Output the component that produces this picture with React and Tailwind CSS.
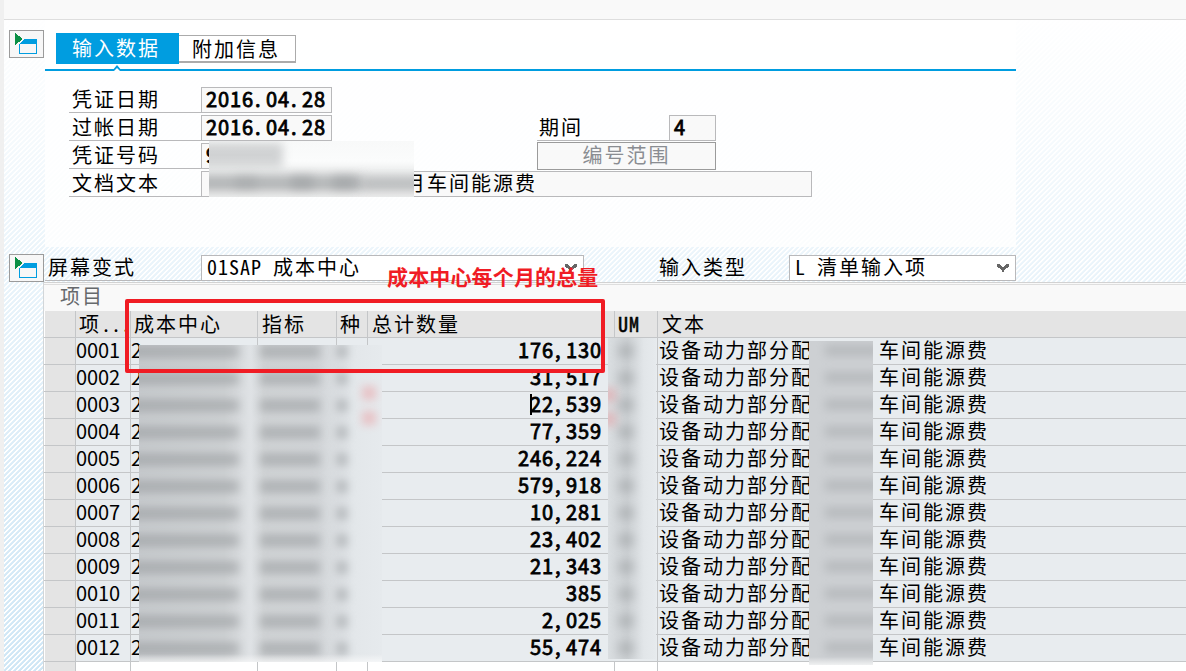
const font = "font-['Noto_Sans_CJK_SC',sans-serif]";
const half = "[font-feature-settings:'hwid'] tracking-[1px]";

const rows = [
  ["0001", "176,130"],
  ["0002", "31,517"],
  ["0003", "22,539"],
  ["0004", "77,359"],
  ["0005", "246,224"],
  ["0006", "579,918"],
  ["0007", "10,281"],
  ["0008", "23,402"],
  ["0009", "21,343"],
  ["0010", "385"],
  ["0011", "2,025"],
  ["0012", "55,474"],
];

const columns = "grid grid-cols-[32px_55px_127px_79px_31px_247px_43px_1fr]";

// Emphasised figures: every character, punctuation included, takes a 12px cell.
function Figures({ value }) {
  return (
    <span className="tracking-[0.9px] [-webkit-text-stroke:0.8px_#000]">
      {value.split(/([.,])/).map((part, i) =>
        part === "." || part === "," ? (
          <span key={i} className="inline-block w-3 pl-px text-left">
            {part}
          </span>
        ) : (
          part
        ),
      )}
    </span>
  );
}

function Stripes({ className }) {
  return (
    <div
      className={
        "absolute bg-[repeating-linear-gradient(135deg,#cce5f5_0px,#cce5f5_1.6px,#ffffff_2px,#ffffff_3.1px,#cce5f5_3.536px)] " +
        className
      }
    />
  );
}

function PanelButton() {
  return (
    <div className="h-7 w-[35px] shrink-0 border border-[#9b9b9b] bg-[#f7f7f7]">
      <svg width="33" height="26" viewBox="0 0 33 26" shapeRendering="crispEdges">
        <path d="M9 8h18v15H9z" fill="#009de0" />
        <path d="M10 13h16v9H10z" fill="#f7f7f7" />
        <path d="M4 1h3l8 7-8 7H4z" fill="#f7f7f7" />
        <path d="M5 2l8 6-8 6z" fill="#0a8f45" />
      </svg>
    </div>
  );
}

function Label({ children, className = "" }) {
  return (
    <div className={"h-[26px] border-b border-[#b9b9bb] leading-[24px] whitespace-pre tracking-[2px] " + className}>
      {children}
    </div>
  );
}

function Chevron() {
  return (
    <svg width="12" height="8" viewBox="0 0 12 8" shapeRendering="crispEdges" className="mt-[8px] mr-[6px] shrink-0">
      <path d="M0 0h3v1h1v1h1v1h2v-1h1v-1h1v-1h3v3h-1v1h-2v1h-1v1h-1v2h-2v-2h-1v-1h-1v-1h-2v-1h-1z" fill="#666666" />
    </svg>
  );
}

function Field({ children, className = "" }) {
  return (
    <div className={"h-[26px] border border-[#b9b9bb] bg-[#f9f9f9] leading-[22px] whitespace-pre " + className}>
      {children}
    </div>
  );
}

function Smudge({ className }) {
  return <div className={"absolute bg-[#85898c] blur-[5px] " + className} />;
}

export default function App() {
  return (
    <div className={"relative flex h-[671px] w-[1186px] overflow-hidden bg-white text-[20px] text-black " + font}>
      <div className="w-1 shrink-0 bg-[#f0f0f0]" />
      <Stripes className="top-5 bottom-0 left-1 right-0" />
      <div className="absolute top-5 bottom-0 left-1 right-0 bg-[linear-gradient(to_bottom,#fffffffa_0%,#ffffffd8_15%,#ffffff98_38%,#ffffff40_75%,#ffffff10_100%)]" />
      <div className="absolute top-5 left-[45px] h-[227px] w-[971px] bg-white/80" />

      <div className="relative flex min-w-0 flex-1 flex-col">
        <div className="h-5 shrink-0 border-b border-[#dedede] bg-[#f9f9f9]" />
        <div className="flex h-[235px] shrink-0 pt-[10px] pl-[5px]">
          <PanelButton />
          <div className="ml-px w-[971px]">
            <div className="flex h-[41px] items-start border-b-2 border-[#009de0] pt-[3px] pl-[11px]">
              <div className="relative h-[31px] w-[123px] bg-[#009de0] pl-4 leading-[29px] tracking-[2px] text-white">
                输入数据
                <svg width="10" height="6" viewBox="0 0 10 6" className="absolute top-[32px] left-[56px]">
                  <path d="M0 6L5 0l5 6z" fill="#009de0" />
                  <path d="M2 6l3-3 3 3z" fill="#fff" />
                </svg>
              </div>
              <div className="mt-[2px] h-7 w-[117px] border border-b-2 border-l-0 border-[#ababab] bg-white pl-[13px] leading-[25px] tracking-[2px]">
                附加信息
              </div>
            </div>
            <div className="mt-4 ml-6 flex flex-col gap-[2px]">
              <div className="flex">
                <Label className="w-[132px] pl-[3px]">凭证日期</Label>
                <Field className="w-[131px] pl-1">
                  <Figures value="2016.04.28" />
                </Field>
              </div>
              <div className="flex">
                <Label className="w-[132px] pl-[3px]">过帐日期</Label>
                <Field className="w-[131px] pl-1">
                  <Figures value="2016.04.28" />
                </Field>
                <Label className="ml-[205px] w-[132px] pl-[2px]">期间</Label>
                <Field className="w-[47px] pl-1">
                  <Figures value="4" />
                </Field>
              </div>
              <div className="flex">
                <Label className="w-[132px] pl-[3px]">凭证号码</Label>
                <Field className="w-[131px] pl-1">
                  <Figures value="9" />
                </Field>
                <div className="-mt-px ml-[205px] h-7 w-[179px] border border-[#9b9b9b] bg-[#f9f9f9] text-center leading-[24px] tracking-[2px] text-[#8a8d92]">
                  编号范围
                </div>
              </div>
              <div className="-mt-px flex">
                <Label className="w-[132px] pl-[3px]">文档文本</Label>
                <Field className="w-[611px] pl-[203px] tracking-[2px]">月车间能源费</Field>
              </div>
            </div>
          </div>
        </div>

        <div className="flex h-[27px] shrink-0 pl-[5px]">
          <div className="-mt-px">
            <PanelButton />
          </div>
          <Label className="ml-px w-[156px] pl-[3px]">屏幕变式</Label>
          <Field className="flex w-[383px] justify-between bg-white pl-[5px]">
            <span className={half}>01SAP <span className="tracking-[2px]">成本中心</span></span>
            <Chevron />
          </Field>
          <Label className="ml-[73px] w-[132px] pl-[2px]">输入类型</Label>
          <Field className="flex w-[227px] justify-between bg-white pl-[5px]">
            <span className={half}>L <span className="tracking-[2px]">清单输入项</span></span>
            <Chevron />
          </Field>
        </div>

        <div className="relative ml-[39px] flex-1 border-l border-[#d2d6d9] bg-white">
          <div className="h-[29px] border-t border-[#d2d2d2] bg-[#f9f9f9]">
            <div className="mt-px h-[27px] border-t border-[#dedede] pl-4 leading-[22px] tracking-[2px] text-[#66696c]">
              项目
            </div>
          </div>
          <div className={columns + " h-[27px] border-b border-[#c4c6c8] bg-[#e4e4e4] leading-[26px] tracking-[2px] whitespace-pre"}>
            <div className="border-r border-l border-[#c4c6c8] border-l-white" />
            <div className="border-r border-[#c4c6c8] pl-[3px]">
              项<span className="tracking-normal [font-feature-settings:'hwid']">...</span>
            </div>
            <div className="border-r border-[#c4c6c8] pl-[3px]">成本中心</div>
            <div className="border-r border-[#c4c6c8] pl-1">指标</div>
            <div className="border-r border-[#c4c6c8] pl-[3px] tracking-normal">种</div>
            <div className="border-r border-[#c4c6c8] pl-1">总计数量</div>
            <div className={"border-r border-[#c4c6c8] pl-[3px] [-webkit-text-stroke:0.5px_#000] " + half}>UM</div>
            <div className="pl-1">文本</div>
          </div>
          {rows.map(([no, qty]) => (
            <div
              key={no}
              className={columns + " h-[27px] border-b border-[#c4c6c8] bg-[#e8ecef] leading-[24px] whitespace-pre"}
            >
              <div className="border-r border-l border-[#c4c6c8] border-l-white bg-[#e4e4e4]" />
              <div className="border-r border-[#c4c6c8] tracking-[-0.1px]">{no}</div>
              <div className="border-r border-[#c4c6c8]">2</div>
              <div className="border-r border-[#c4c6c8]" />
              <div className="border-r border-[#c4c6c8]" />
              <div className="pr-[13px] text-right">
                <Figures value={qty} />
              </div>
              <div className="border-r border-[#c4c6c8]" />
              <div className="flex pl-px tracking-[2px]">
                <span className="w-[220px]">设备动力部分配</span>
                <span>车间能源费</span>
              </div>
            </div>
          ))}
          <div className={columns + " h-[10px]"}>
            <div className="border-r border-l border-[#c4c6c8] border-l-white bg-[#e4e4e4]" />
            <div className="border-r border-[#c4c6c8]" />
            <div className="border-r border-[#c4c6c8]" />
            <div className="border-r border-[#c4c6c8]" />
            <div className="border-r border-[#c4c6c8]" />
            <div className="border-r border-[#c4c6c8]" />
            <div className="border-r border-[#c4c6c8]" />
            <div />
          </div>
        </div>
      </div>

      {/* redacted form values */}
      <div className="absolute top-[141px] left-[209px] h-[56px] w-[205px] overflow-hidden bg-[linear-gradient(to_bottom,#f8f9f9_0px,#fbfcfc_20px,#e9eaea_34px,#e0e1e1_46px,#ececec_56px)]">
        <Smudge className="top-[2px] -left-3 h-[24px] w-[86px] opacity-35" />
        <Smudge className="top-[34px] -left-3 h-[15px] w-[166px] opacity-50" />
        <Smudge className="top-[34px] left-[26px] h-[15px] w-[22px] opacity-20" />
        <Smudge className="top-[34px] left-[82px] h-[15px] w-[22px] opacity-30" />
        <Smudge className="top-[34px] left-[124px] h-[15px] w-[22px] opacity-30" />
        <Smudge className="top-[35px] left-[154px] h-[14px] w-[60px] opacity-40" />
      </div>

      {/* redacted key columns */}
      <div className="absolute top-[345px] left-[139px] h-[317px] w-[243px] overflow-hidden bg-[linear-gradient(to_right,#c9cccf_0px,#cfd2d4_85px,#dfe2e5_112px,#d2d5d7_125px,#d3d6d9_180px,#e3e7ea_215px,#e6eaed_243px)]">
        {rows.map(([no], i) => (
          <div key={no} className="absolute left-0 h-[27px] w-full" style={{ top: i * 27 - 7 }}>
            <Smudge className="top-[7px] -left-2 h-[13px] w-[108px] opacity-45" />
            <Smudge className="top-[7px] left-[121px] h-[13px] w-[60px] opacity-45" />
            <Smudge className="top-[7px] left-[198px] h-[13px] w-[10px] opacity-50" />
          </div>
        ))}
        <div className="absolute top-[41px] left-[223px] h-[14px] w-[14px] bg-[#ee6b70] opacity-30 blur-[4px]" />
        <div className="absolute top-[66px] left-[223px] h-[14px] w-[14px] bg-[#ee6b70] opacity-30 blur-[4px]" />
        <div className="absolute bottom-0 h-2 w-full bg-gradient-to-b from-transparent to-white/60" />
      </div>
      <div className="absolute top-[338px] left-[608px] h-[321px] w-[48px] overflow-hidden bg-[linear-gradient(to_right,#dadee1,#cdd1d4_40%,#e2e6e9_75%,#e6eaed)]">
        {rows.map(([no], i) => (
          <div key={no} className="absolute left-0 h-[27px] w-full" style={{ top: i * 27 }}>
            <Smudge className="top-[6px] left-[10px] h-[14px] w-[16px] opacity-35" />
          </div>
        ))}
        <div className="absolute top-[50px] -left-2 h-[14px] w-[16px] bg-[#ee6b70] opacity-30 blur-[4px]" />
        <div className="absolute top-[74px] -left-2 h-[14px] w-[16px] bg-[#ee6b70] opacity-30 blur-[4px]" />
      </div>
      <div className="absolute top-[341px] left-[809px] h-[324px] w-[64px] overflow-hidden bg-[#cdd0d3]">
        {rows.map(([no], i) => (
          <div key={no} className="absolute left-0 h-[27px] w-full" style={{ top: i * 27 - 3 }}>
            <Smudge className="top-[7px] left-[16px] h-[11px] w-[54px] opacity-30" />
          </div>
        ))}
        <div className="absolute bottom-0 h-2 w-full bg-gradient-to-b from-transparent to-white/70" />
      </div>

      {/* text caret */}
      <div className="absolute top-[394px] left-[530px] h-[21px] w-[2px] bg-black" />

      {/* annotation */}
      <div className="absolute top-[299px] left-[125px] h-[74px] w-[480px] rounded-[2px] border-4 border-[#f01c24]" />
      <div className="absolute top-[261px] left-[387px] text-[21px] leading-[30px] font-bold tracking-[0.15px] whitespace-nowrap text-[#f01c24]">
        成本中心每个月的总量
      </div>
    </div>
  );
}
